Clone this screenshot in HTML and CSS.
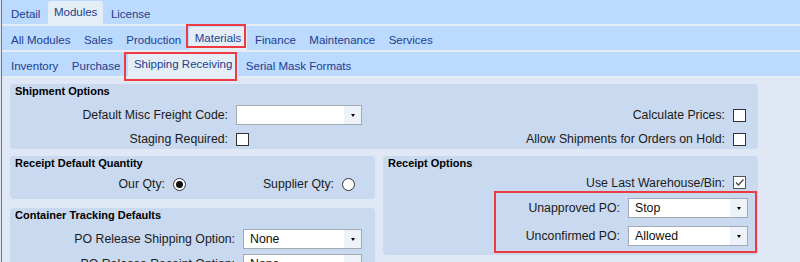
FILE: index.html
```html
<!DOCTYPE html>
<html>
<head>
    <meta charset="utf-8">
    <link rel="stylesheet" href="styles.css">
</head>
<body>
<div class="page">
    <div class="tabrow">
        <span class="tab">Detail</span>
        <span class="tab active">Modules</span>
        <span class="tab">License</span>
    </div>
    <div class="tabrow">
        <span class="tab">All Modules</span>
        <span class="tab">Sales</span>
        <span class="tab">Production</span>
        <span class="tab active mark-materials">Materials</span>
        <span class="tab">Finance</span>
        <span class="tab">Maintenance</span>
        <span class="tab">Services</span>
    </div>
    <div class="tabrow">
        <span class="tab">Inventory</span>
        <span class="tab">Purchase</span>
        <span class="tab active mark-shipping">Shipping Receiving</span>
        <span class="tab">Serial Mask Formats</span>
    </div>

    <div class="content">
        <div class="panel">
            <div class="panel-title">Shipment Options</div>
            <div class="shipment-grid">
                <span class="field-label">Default Misc Freight Code:</span>
                <div class="combo"><span class="combo-value"></span><span class="combo-arrow"></span></div>
                <span class="field-label">Calculate Prices:</span>
                <span class="check"></span>

                <span class="field-label">Staging Required:</span>
                <span class="check"></span>
                <span class="field-label">Allow Shipments for Orders on Hold:</span>
                <span class="check"></span>
            </div>
        </div>

        <div class="columns">
            <div class="stack">
                <div class="panel">
                    <div class="panel-title">Receipt Default Quantity</div>
                    <div class="qty-grid">
                        <span class="field-label">Our Qty:</span>
                        <span class="radio on"></span>
                        <span class="field-label">Supplier Qty:</span>
                        <span class="radio"></span>
                    </div>
                </div>
                <div class="panel tracking">
                    <div class="panel-title">Container Tracking Defaults</div>
                    <div class="tracking-grid">
                        <span class="field-label">PO Release Shipping Option:</span>
                        <div class="combo"><span class="combo-value">None</span><span class="combo-arrow"></span></div>
                        <span class="field-label">PO Release Receipt Option:</span>
                        <div class="combo"><span class="combo-value">None</span><span class="combo-arrow"></span></div>
                    </div>
                </div>
            </div>

            <div class="panel receipt-options">
                <div class="panel-title">Receipt Options</div>
                <div class="option-row warehouse-row">
                    <span class="field-label">Use Last Warehouse/Bin:</span>
                    <span class="check checked">
                        <svg width="11" height="11" viewBox="0 0 11 11"><polyline points="2,5.5 4.5,8 9.5,2.5" fill="none" stroke="#4a4a4a" stroke-width="1.3"/></svg>
                    </span>
                </div>
                <div class="po-box">
                    <div class="option-row">
                        <span class="field-label">Unapproved PO:</span>
                        <div class="combo"><span class="combo-value">Stop</span><span class="combo-arrow"></span></div>
                    </div>
                    <div class="option-row">
                        <span class="field-label">Unconfirmed PO:</span>
                        <div class="combo"><span class="combo-value">Allowed</span><span class="combo-arrow"></span></div>
                    </div>
                </div>
            </div>
        </div>
    </div>
</div>
</body>
</html>
```

FILE: styles.css
```css
body {
    margin: 0;
    font-family: "Liberation Sans", Arial, sans-serif;
    background-color: #dfe8f4;
    overflow: hidden;
}

.page {
    height: 262px;
    margin-left: 1px;
    border-left: 1px solid #3d7dd5;
    background-color: #dfe8f4;
}

/* tab strips */
.tabrow {
    display: flex;
    gap: 1.5px;
    height: 24px;
    padding-left: 3px;
    background-color: #bcd9fe;
    border-bottom: 2px solid #e6ecf3;
}

.tab {
    position: relative;
    padding: 4px 6px 0;
    line-height: 20px;
    font-size: 11.5px;
    color: #22408c;
    white-space: nowrap;
}

.tab.active {
    margin-top: 1px;
    padding: 1px 6px 2px;
    background-color: #e5edf7;
    border-radius: 3px 3px 0 0;
}

.mark-materials::after,
.mark-shipping::after {
    content: "";
    position: absolute;
    border: 2px solid #ee3b3f;
}

.mark-materials::after {
    top: -3px;
    bottom: 2px;
    left: -3px;
    right: 1px;
}

.mark-shipping::after {
    top: -1px;
    bottom: -5px;
    left: -4px;
    right: 1px;
}

/* content */
.content {
    padding: 6px 42px 0 8px;
}

.panel {
    background-color: #c9d9ef;
    border-radius: 4px;
}

.panel-title {
    padding: 1px 5px 0;
    line-height: 13px;
    font-size: 11px;
    font-weight: bold;
    color: #000;
}

.field-label {
    font-size: 12.3px;
    color: #1b1b1b;
    text-align: right;
    white-space: nowrap;
}

.shipment-grid {
    display: grid;
    grid-template-columns: 218px 126px 1fr 13px;
    grid-auto-rows: 20px;
    column-gap: 8px;
    row-gap: 4px;
    align-items: center;
    padding: 7px 12px 0 0;
}

.columns {
    display: grid;
    grid-template-columns: 365px 1fr;
    column-gap: 8px;
    align-items: start;
    margin-top: 7px;
}

.stack {
    display: flex;
    flex-direction: column;
    gap: 9px;
}

.qty-grid {
    display: grid;
    grid-template-columns: 155px 13px 140px 13px;
    grid-auto-rows: 20px;
    column-gap: 8px;
    align-items: center;
    padding: 4px 0 5px;
}

.tracking {
    height: 80px;
}

.tracking-grid {
    display: grid;
    grid-template-columns: 225px 119px;
    grid-auto-rows: 20px;
    column-gap: 8px;
    row-gap: 5px;
    align-items: center;
    padding-top: 7px;
}

.receipt-options {
    padding-bottom: 2px;
}

.option-row {
    display: flex;
    justify-content: flex-end;
    align-items: center;
    gap: 8px;
}

.warehouse-row {
    height: 17px;
    margin-top: 4px;
    padding-right: 12px;
}

.po-box {
    box-sizing: border-box;
    width: 263px;
    margin: 0 1px 0 auto;
    padding: 5px 7px 5px 0;
    border: 2px solid #ee3b3f;
    display: flex;
    flex-direction: column;
    gap: 8px;
}

.po-box .combo {
    width: 118px;
}

/* controls */
.combo {
    display: flex;
    height: 18px;
    border: 1px solid #a3aab4;
    background-color: #fff;
}

.combo-value {
    flex: 1;
    padding-left: 6px;
    line-height: 18px;
    font-size: 12.3px;
    color: #111;
}

.combo-arrow {
    width: 17px;
    display: flex;
    align-items: center;
    justify-content: center;
    background-color: #eef3f9;
}

.combo-arrow::before {
    content: "";
    border-left: 2.5px solid transparent;
    border-right: 2.5px solid transparent;
    border-top: 3px solid #000;
}

.check {
    justify-self: start;
    width: 11px;
    height: 11px;
    border: 1px solid #333;
    background-color: #fff;
}

.check.checked {
    border-color: #555;
}

.check svg {
    display: block;
}

.radio {
    width: 11px;
    height: 11px;
    border: 1px solid #333;
    border-radius: 50%;
    background-color: #fff;
    display: flex;
    align-items: center;
    justify-content: center;
}

.radio.on::after {
    content: "";
    width: 7px;
    height: 7px;
    border-radius: 50%;
    background-color: #111;
}
```
